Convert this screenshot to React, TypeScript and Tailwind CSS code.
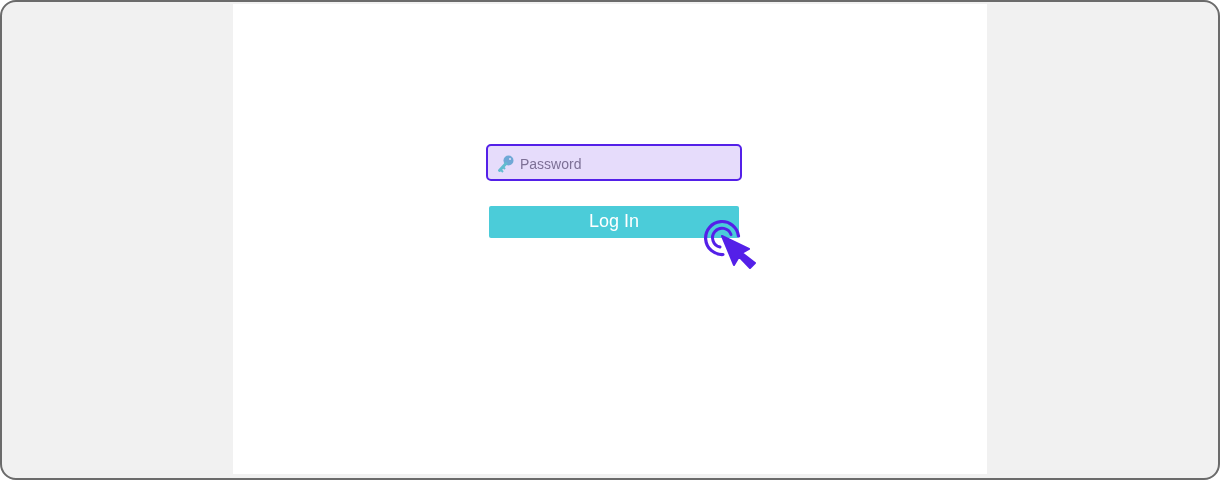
function KeyIcon() {
  return (
    <svg width="18" height="20" viewBox="0 0 18 20" fill="none" className="mt-[3px] blur-[0.6px]" aria-hidden="true">
      <circle cx="11.5" cy="6.5" r="5" fill="#6fa8d6" />
      <circle cx="13" cy="5" r="1" fill="#e6dcfb" />
      <path d="M9 9.5 L2.5 16.5" stroke="#62bcd0" strokeWidth="3" strokeLinecap="round" />
      <path d="M3.5 15.5 L6 18 M6 13 L8 15" stroke="#62bcd0" strokeWidth="2" />
    </svg>
  )
}

function ClickCursor() {
  return (
    <svg
      className="absolute left-[214px] top-[74px]"
      width="58"
      height="52"
      viewBox="0 0 58 52"
      fill="none"
      aria-hidden="true"
    >
      <path
        d="M23 36.5 A16.5 16.5 0 1 1 38.5 18"
        stroke="#5420e8"
        strokeWidth="3.2"
        strokeLinecap="round"
      />
      <path
        d="M20 29 A9.5 9.5 0 1 1 31 16.5"
        stroke="#5420e8"
        strokeWidth="3"
        strokeLinecap="round"
      />
      <path
        d="M22 18 L49 31 L42 35 L55 45 L50 50 L39 38.5 L34 47 Z"
        fill="#5420e8"
        stroke="#5420e8"
        strokeWidth="2"
        strokeLinejoin="round"
      />
    </svg>
  )
}

export default function App() {
  return (
    <div className="h-[480px] w-[1220px] overflow-hidden rounded-[16px] border-2 border-[#6b6b6b] bg-[#f1f1f1] font-['Liberation_Sans',sans-serif]">
      <div className="mx-auto mt-[2px] flex h-[470px] w-[754px] flex-col items-center bg-white pl-[8px] pt-[140px]">
        <div className="relative flex w-[256px] flex-col items-center">
          {/* password field */}
          <div className="flex h-[37px] w-full items-center rounded-[5px] border-2 border-[#5420e8] bg-[#e6dcfb] pl-[9px]">
            <KeyIcon />
            <span className="ml-[5px] pt-[3px] text-[14px] text-[#7d7096] blur-[0.5px]">Password</span>
          </div>

          <button
            type="button"
            className="mt-[25px] h-[32px] w-[250px] rounded-[2px] bg-[#4bccd9] pb-[2px] text-center text-[18px] leading-[28px] text-white"
          >
            <span className="blur-[0.5px]">Log In</span>
          </button>

          <ClickCursor />
        </div>
      </div>
    </div>
  )
}
